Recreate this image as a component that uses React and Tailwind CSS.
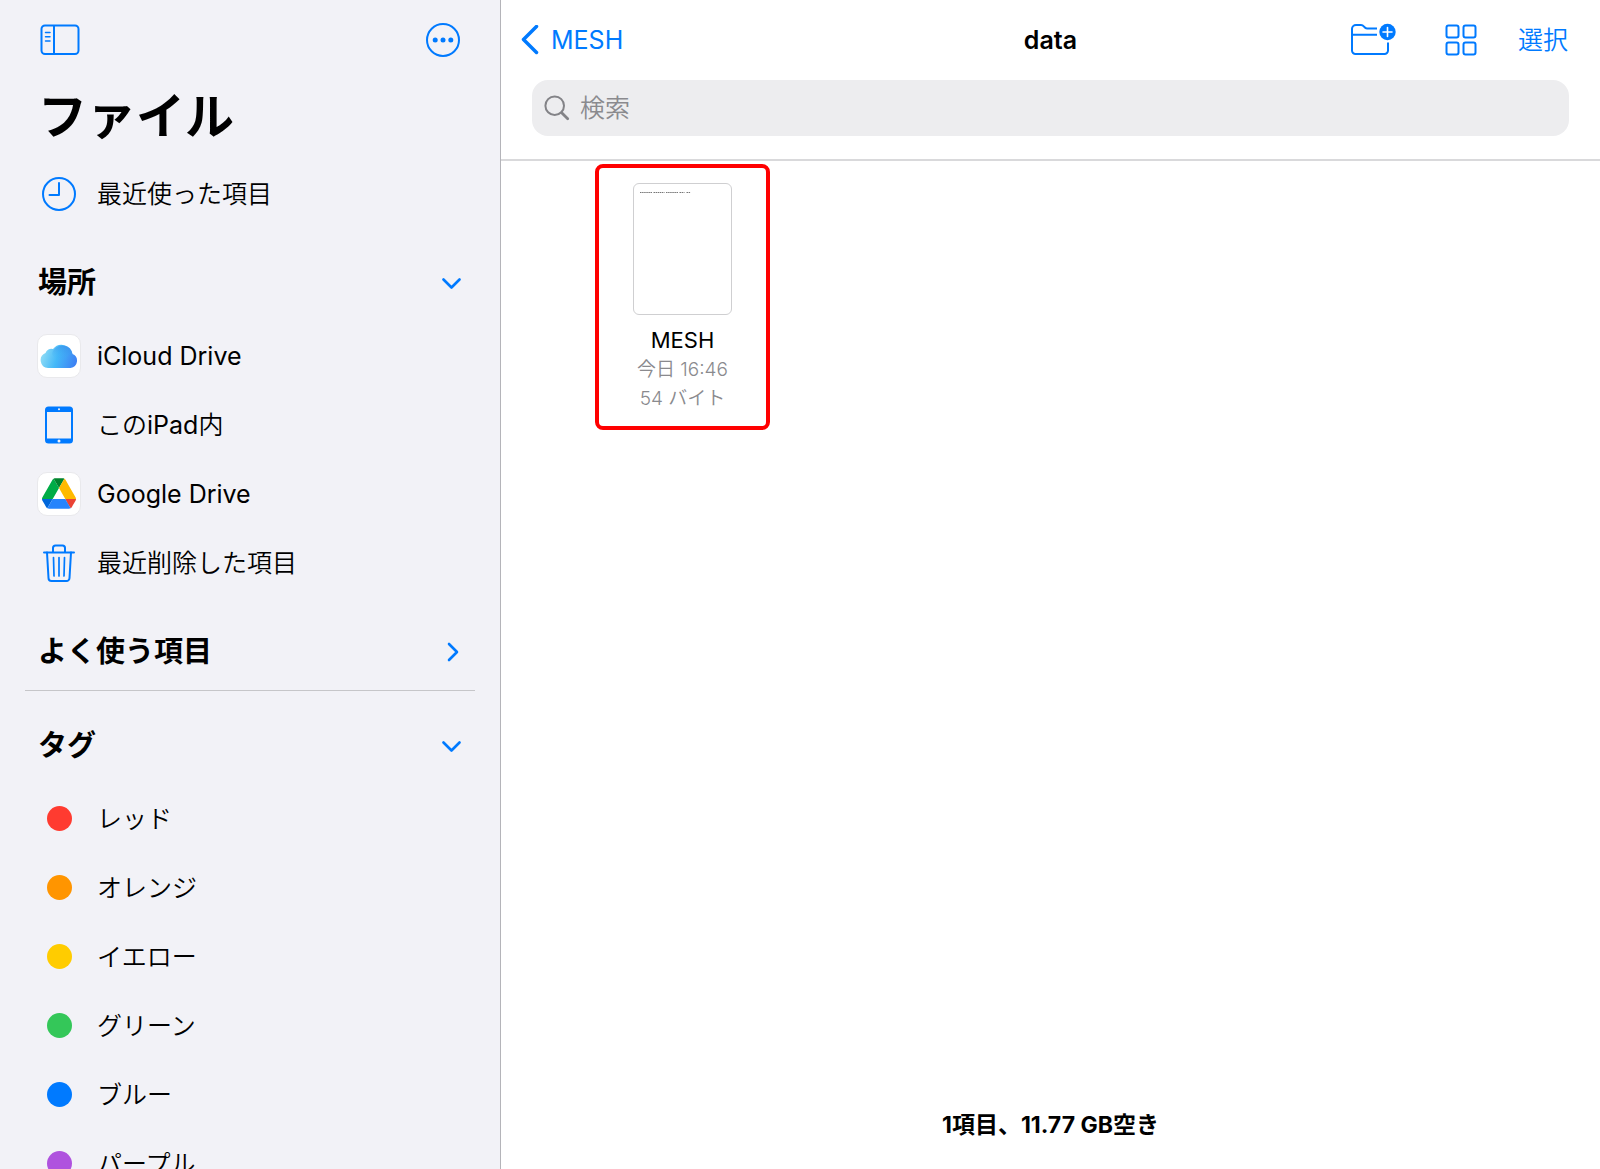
import React from 'react'

const places = [
  { name: 'iCloud Drive', icon: <CloudIcon />, latin: true },
  { name: <>この<span className="font-normal">iPad</span>内</>, icon: <TabletIcon /> },
  { name: 'Google Drive', icon: <DriveIcon />, latin: true },
  { name: '最近削除した項目', icon: <TrashIcon /> },
]

const tags = [
  { name: 'レッド', color: 'bg-[#ff3b30]' },
  { name: 'オレンジ', color: 'bg-[#ff9500]' },
  { name: 'イエロー', color: 'bg-[#ffcc00]' },
  { name: 'グリーン', color: 'bg-[#34c759]' },
  { name: 'ブルー', color: 'bg-[#007aff]' },
  { name: 'パープル', color: 'bg-[#af52de]' },
]

function SidebarIcon() {
  return (
    <svg width="40" height="32" viewBox="0 0 40 32" fill="none" stroke="currentColor" strokeWidth="2">
      <rect x="1.5" y="1.5" width="37" height="28.500" rx="3.5" />
      <path d="M14 1.5v28.500" />
      <path d="M5.500 8.500h4.500M5.500 12.700h4.500M5.500 17h4.500" strokeWidth="1.500" strokeLinecap="round" />
    </svg>
  )
}

function MoreIcon() {
  return (
    <svg width="34" height="34" viewBox="0 0 34 34" fill="none">
      <circle cx="17" cy="17" r="16" stroke="currentColor" strokeWidth="2" />
      <g fill="currentColor">
        <circle cx="9.200" cy="17" r="2.500" />
        <circle cx="17" cy="17" r="2.500" />
        <circle cx="24.800" cy="17" r="2.500" />
      </g>
    </svg>
  )
}

function ClockIcon() {
  return (
    <svg width="34" height="34" viewBox="0 0 34 34" fill="none" stroke="currentColor" strokeWidth="2">
      <circle cx="17" cy="17" r="16" />
      <path d="M17 6v12H7.500" strokeLinecap="round" strokeLinejoin="round" />
    </svg>
  )
}

function CloudIcon() {
  return (
    <span className="flex size-11 items-center justify-center rounded-[10px] border border-[#e9e9ec] bg-white">
      <svg width="38" height="26" viewBox="0 0 38 26" className="shrink-0">
        <defs>
          <linearGradient id="cloud" x1="0" y1="0.5" x2="1" y2="0.7">
            <stop offset="0" stopColor="#8fdcf5" />
            <stop offset="0.45" stopColor="#44b8f8" />
            <stop offset="1" stopColor="#3d7ff3" />
          </linearGradient>
          <linearGradient id="cloudTop" x1="0.3" y1="1" x2="0.7" y2="0">
            <stop offset="0" stopColor="#3fb6fa" stopOpacity="0" />
            <stop offset="1" stopColor="#3a8ce8" />
          </linearGradient>
        </defs>
        <path d="M8 25a7.800 7.800 0 0 1-2.500-15A6 6 0 0 1 13 6a11 11 0 0 1 19.500 5A7.300 7.300 0 0 1 30.500 25z" fill="url(#cloud)" />
        <path d="M12 11a10.500 10.500 0 0 1 20.500 0c-5 0-6 4-6 6l-12-1z" fill="url(#cloudTop)" opacity="0.7" />
      </svg>
    </span>
  )
}

function TabletIcon() {
  return (
    <svg width="28" height="38" viewBox="0 0 28 38">
      <rect x="0" y="0.500" width="28" height="37" rx="3.500" fill="#007aff" />
      <rect x="2" y="6" width="24" height="26.500" fill="#f2f2f7" />
      <circle cx="14" cy="3.300" r="1" fill="#f2f2f7" />
      <circle cx="14" cy="35" r="1.500" fill="#f2f2f7" />
    </svg>
  )
}

function DriveIcon() {
  return (
    <span className="flex size-11 items-center justify-center rounded-[10px] border border-[#e9e9ec] bg-white">
      <svg width="34" height="31" viewBox="0 0 87.300 78">
        <path d="m6.600 66.850 3.850 6.650c.8 1.400 1.950 2.500 3.300 3.300l13.750-23.800h-27.500c0 1.550.4 3.100 1.200 4.500z" fill="#0066da" />
        <path d="m43.650 25-13.750-23.800c-1.350.8-2.500 1.900-3.300 3.300l-25.400 44a9.060 9.060 0 0 0 -1.200 4.500h27.500z" fill="#00ac47" />
        <path d="m73.550 76.800c1.350-.8 2.500-1.900 3.300-3.300l1.600-2.750 7.650-13.250c.8-1.400 1.200-2.950 1.200-4.500h-27.502l5.852 11.500z" fill="#ea4335" />
        <path d="m43.650 25 13.750-23.800c-1.350-.8-2.900-1.200-4.500-1.200h-18.500c-1.600 0-3.150.45-4.500 1.200z" fill="#00832d" />
        <path d="m59.800 53h-32.300l-13.750 23.800c1.350.8 2.900 1.200 4.500 1.200h50.800c1.600 0 3.150-.45 4.500-1.200z" fill="#2684fc" />
        <path d="m73.400 26.500-12.700-22c-.8-1.400-1.950-2.500-3.300-3.300l-13.750 23.800 16.150 28h27.450c0-1.550-.4-3.100-1.200-4.500z" fill="#ffba00" />
      </svg>
    </span>
  )
}

function TrashIcon() {
  return (
    <svg width="32" height="38" viewBox="0 0 32 38" fill="none" stroke="#007aff" strokeWidth="2" strokeLinecap="round" strokeLinejoin="round">
      <path d="M1 8.500h30M10 8V4a2.500 2.500 0 0 1 2.500-2.500h7A2.500 2.500 0 0 1 22 4v4" />
      <path d="M4 8.500l1.500 25.500a3 3 0 0 0 3 3h15a3 3 0 0 0 3-3L28 8.500" />
      <path d="M10.500 13.500l.5 18.500M16 13.500V32M21.500 13.500L21 32" strokeWidth="1.700" />
    </svg>
  )
}

function FolderPlusIcon() {
  return (
    <svg width="46" height="34" viewBox="0 0 46 34" fill="none">
      <path d="M27 5.500H17c-1.500 0-2.200-.8-3-1.800S12.500 2 11 2H6a4 4 0 0 0-4 4v21.500A3.500 3.500 0 0 0 5.500 31h29a3.500 3.500 0 0 0 3.500-3.500V19.500M2 11.700h25" stroke="currentColor" strokeWidth="2" />
      <circle cx="37.500" cy="9" r="8.200" fill="currentColor" />
      <path d="M37.500 4.500v9M33 9h9" stroke="#fff" strokeWidth="1.600" strokeLinecap="round" />
    </svg>
  )
}

function GridIcon() {
  return (
    <svg width="32" height="32" viewBox="0 0 32 32" fill="none" stroke="currentColor" strokeWidth="2">
      <rect x="1.500" y="1.500" width="12" height="12" rx="2" />
      <rect x="18.500" y="1.500" width="12" height="12" rx="2" />
      <rect x="1.500" y="18.500" width="12" height="12" rx="2" />
      <rect x="18.500" y="18.500" width="12" height="12" rx="2" />
    </svg>
  )
}

function SearchIcon() {
  return (
    <svg width="26" height="26" viewBox="0 0 26 26" fill="none" stroke="#838387" strokeLinecap="round">
      <circle cx="10.700" cy="10.700" r="9.300" strokeWidth="2" />
      <path d="M17.700 17.700l6 6" strokeWidth="2.800" />
    </svg>
  )
}

function Chevron({ open }) {
  return (
    <svg width="20" height="20" viewBox="0 0 20 20" fill="none" stroke="#007aff" strokeWidth="2.600" strokeLinecap="round" strokeLinejoin="round">
      {open ? <path d="M1.500 6.500l8 8 8-8" /> : <path d="M7 2l8 8-8 8" />}
    </svg>
  )
}

function SectionHeader({ title, open }) {
  return (
    <h2>
      <button className="flex h-[76px] w-full items-center justify-between px-[38px] text-[29px] font-bold" aria-expanded={open}>
        {title}
        <Chevron open={open} />
      </button>
    </h2>
  )
}

function Row({ icon, latin, children }) {
  return (
    <li>
      <a href="#" className="flex h-[69px] items-center gap-4 pl-[37px]">
        <span className="flex w-11 shrink-0 justify-center text-[#007aff]">{icon}</span>
        <span className={latin ? 'pt-0.5 text-[25px]' : 'pt-0.5 text-[25px] font-[350]'}>{children}</span>
      </a>
    </li>
  )
}

function Sidebar() {
  return (
    <aside className="w-[501px] shrink-0 overflow-hidden border-r border-[#b4b4b9] bg-[#f2f2f7]">
      <div className="flex h-[79px] items-center justify-between px-10 text-[#007aff]">
        <button aria-label="サイドバー"><SidebarIcon /></button>
        <button aria-label="その他"><MoreIcon /></button>
      </div>
      <h1 className="flex h-20 items-center pb-1 pl-[38px] text-[49px] font-bold">ファイル</h1>
      <ul>
        <Row icon={<ClockIcon />}>最近使った項目</Row>
      </ul>
      <div className="pt-[17px]">
        <SectionHeader title="場所" open />
      </div>
      <ul>
        {places.map((place, i) => (
          <Row key={i} icon={place.icon} latin={place.latin}>{place.name}</Row>
        ))}
      </ul>
      <div className="mx-[25px] border-b border-[#c6c6c9] pt-[17px]">
        <div className="-mx-[25px]">
          <SectionHeader title="よく使う項目" open={false} />
        </div>
      </div>
      <div className="pt-[17px]">
        <SectionHeader title="タグ" open />
      </div>
      <ul>
        {tags.map((tag) => (
          <Row key={tag.name} icon={<span className={`size-[25px] rounded-full ${tag.color}`} />}>{tag.name}</Row>
        ))}
      </ul>
    </aside>
  )
}

function FileItem() {
  return (
    <button className="flex w-[175px] flex-col items-center rounded-lg border-4 border-[#ff0000] pt-[15px] pb-3">
      <span className="mb-[9px] h-[132px] w-[99px] rounded-md border border-[#cfcfd1] px-1.5 pt-[7px]">
        <svg width="52" height="3" viewBox="0 0 52 3" className="block" stroke="#777" strokeWidth="1.200">
          <path d="M0 1.500h12M13.500 1.500h11M26 1.500h12M39.500 1.500h5M46.500 1.500h4" strokeDasharray="1.500 0.600" />
        </svg>
      </span>
      <span className="text-[22px] leading-8">MESH</span>
      <span className="text-[19px] leading-7 font-[350] text-[#8a8a8e]">今日 16:46</span>
      <span className="text-[19px] leading-[30px] font-[350] text-[#8a8a8e]">54 バイト</span>
    </button>
  )
}

export default function App() {
  return (
    <div className="flex h-screen overflow-hidden bg-white font-['Inter','Noto_Sans_CJK_JP',sans-serif] text-black">
      <Sidebar />
      <main className="flex min-w-0 flex-1 flex-col">
        <header className="border-b-2 border-[#d9d9db] pb-[23px]">
          <div className="grid h-20 grid-cols-3 items-center px-5 text-[25px] text-[#007aff]">
            <a href="#" className="flex items-center gap-3">
              <svg width="18" height="30" viewBox="0 0 18 30" fill="none" stroke="currentColor" strokeWidth="3.500" strokeLinecap="round" strokeLinejoin="round">
                <path d="M15.500 1.500L2.500 14.500l13 13" />
              </svg>
              <span className="pt-0.5">MESH</span>
            </a>
            <h1 className="pt-0.5 text-center font-semibold text-black">data</h1>
            <div className="flex items-center justify-end pr-3">
              <button className="mr-[49px]" aria-label="新規フォルダ"><FolderPlusIcon /></button>
              <button className="mr-[41px]" aria-label="表示"><GridIcon /></button>
              <button className="pt-0.5 font-[350]">選択</button>
            </div>
          </div>
          <label className="mx-[31px] flex h-14 items-center gap-2.5 rounded-2xl bg-[#ededef] px-3">
            <SearchIcon />
            <input type="search" placeholder="検索" aria-label="検索" className="min-w-0 flex-1 bg-transparent pt-0.5 text-[25px] font-[350] outline-none placeholder:text-[#8a8a8e]" />
          </label>
        </header>
        <section className="flex-1 px-[94px] pt-[3px]">
          <FileItem />
        </section>
        <footer className="pb-7 text-center text-[23px] leading-8 font-bold">1項目、11.77 GB空き</footer>
      </main>
    </div>
  )
}
